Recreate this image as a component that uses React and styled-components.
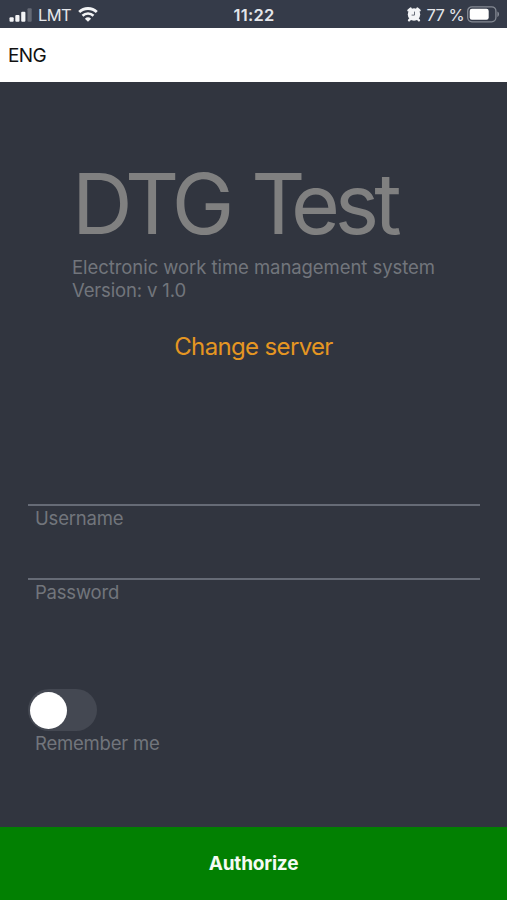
import React, { useState } from "react";
import styled, { createGlobalStyle } from "styled-components";

const App = () => {
  const [remember, setRemember] = useState(false);

  return (
    <Screen>
      <GlobalStyle />
      <StatusBar>
        <StatusGroup>
          <SignalIcon />
          <Carrier>LMT</Carrier>
          <WifiIcon />
        </StatusGroup>
        <Clock>11:22</Clock>
        <StatusGroup $end>
          <AlarmIcon />
          <Percent>77 %</Percent>
          <BatteryIcon />
        </StatusGroup>
      </StatusBar>
      <LanguageBar>ENG</LanguageBar>
      <Content>
        <Heading>
          <Title>
            DTG <TightLetter>T</TightLetter>est
          </Title>
          <Info $spacing="-0.06px">Electronic work time management system</Info>
          <Info $spacing="-0.15px">Version: v 1.0</Info>
        </Heading>
        <ServerLink type="button">Change server</ServerLink>
        <Form>
          <Field>
            <Input id="username" type="text" />
            <Label htmlFor="username">Username</Label>
          </Field>
          <Field>
            <Input id="password" type="password" />
            <Label htmlFor="password">Password</Label>
          </Field>
          <Remember>
            <Switch
              type="button"
              role="switch"
              aria-checked={remember}
              aria-labelledby="remember"
              $on={remember}
              onClick={() => setRemember(!remember)}
            >
              <Knob />
            </Switch>
            <Label as="span" id="remember">
              Remember me
            </Label>
          </Remember>
        </Form>
      </Content>
      <SubmitButton type="button">Authorize</SubmitButton>
    </Screen>
  );
};

export default App;

const SignalIcon = () => (
  <svg width="23" height="14" viewBox="0 0 23 14" fill="#f3f4f6">
    <rect x="0.5" y="9.3" width="4.2" height="4.4" rx="1" />
    <rect x="6.3" y="7" width="4.2" height="6.7" rx="1" />
    <rect x="12.2" y="3.7" width="4.2" height="10" rx="1" />
    <rect x="18.5" y="0.3" width="4.2" height="13.4" rx="1" opacity="0.25" />
  </svg>
);

const WifiIcon = () => (
  <svg width="20" height="15" viewBox="0 0 20 15" fill="none">
    <path d="M1.2 5.1a12.6 12.6 0 0 1 17.6 0" stroke="#f3f4f6" strokeWidth="2.8" />
    <path d="M4.5 8.8a7.9 7.9 0 0 1 11 0" stroke="#f3f4f6" strokeWidth="2.6" />
    <path d="M10 14.8 6.9 11.7a4.5 4.5 0 0 1 6.2 0Z" fill="#f3f4f6" />
  </svg>
);

const AlarmIcon = () => (
  <svg width="14" height="15" viewBox="0 0 14 15" fill="none">
    <path
      d="M1.5 3.4 3.6 1.6M12.5 3.4 10.4 1.6M3 12.2l-.9 1.1M11 12.2l.9 1.1"
      stroke="#f3f4f6"
      strokeWidth="2.4"
      strokeLinecap="round"
    />
    <circle cx="7" cy="7.5" r="6.2" fill="#f3f4f6" />
    <path d="M7.5 4.6v3.5H4.6" stroke="#6b707b" strokeWidth="1" />
  </svg>
);

const BatteryIcon = () => (
  <svg width="33" height="17" viewBox="0 0 33 17" fill="none">
    <rect x="0.7" y="0.8" width="28.2" height="15" rx="4.2" stroke="#858a94" strokeWidth="1.3" />
    <rect x="2.7" y="2.8" width="19" height="11" rx="2.2" fill="#fff" />
    <path d="M30.4 5.6c2.2.9 2.2 4.5 0 5.4Z" fill="#858a94" />
  </svg>
);

const GlobalStyle = createGlobalStyle`
  * {
    box-sizing: border-box;
  }

  body {
    margin: 0;
    background: #31353f;
    font-family: Inter, "Liberation Sans", sans-serif;
  }

  button,
  input {
    font-family: inherit;
  }
`;

const Screen = styled.main`
  display: flex;
  flex-direction: column;
  height: 100vh;
  min-height: 900px;
  overflow: hidden;
  background: #31353f;
`;

const StatusBar = styled.header`
  display: grid;
  grid-template-columns: 1fr auto 1fr;
  align-items: center;
  height: 28px;
  padding: 1px 7px 0 9px;
  background: #353b49;
  color: #e4e6ea;
`;

const StatusGroup = styled.div`
  display: flex;
  align-items: center;
  justify-content: ${({ $end }) => ($end ? "flex-end" : "flex-start")};

  svg {
    flex: none;
  }
`;

const Carrier = styled.span`
  margin: 0 7px 0 6px;
  font-size: 16.5px;
  letter-spacing: -0.6px;
`;

const Clock = styled.span`
  margin-right: 1px;
  font-size: 16.5px;
  font-weight: 600;
  letter-spacing: 0.2px;
`;

const Percent = styled.span`
  margin: 0 3px 0 6px;
  font-size: 16.5px;
  letter-spacing: -0.6px;
`;

const LanguageBar = styled.nav`
  display: flex;
  align-items: center;
  height: 54px;
  padding: 0 8px;
  background: #fff;
  color: #111;
  font-size: 19px;
  letter-spacing: -0.6px;
`;

const Content = styled.section`
  display: flex;
  flex: 1;
  flex-direction: column;
`;

const Heading = styled.div`
  margin: 71px 0 0 72px;
`;

const Title = styled.h1`
  margin: 0 0 2px;
  color: #808080;
  font-size: 84px;
  font-weight: 400;
  line-height: 101px;
  letter-spacing: -5px;
  word-spacing: 3px;
  white-space: nowrap;
`;

/* pulls the following "e" under the bar of the T */
const TightLetter = styled.span`
  letter-spacing: -14.5px;
`;

const Info = styled.p`
  margin: 0;
  color: #72757c;
  font-size: 18.5px;
  line-height: 23px;
  letter-spacing: ${({ $spacing }) => $spacing || "0"};
  white-space: nowrap;
`;

const ServerLink = styled.button`
  align-self: center;
  margin-top: 30px;
  padding: 0;
  border: 0;
  background: none;
  color: #e59622;
  font-size: 24px;
  line-height: 30px;
  letter-spacing: -0.65px;
  cursor: pointer;
`;

const Form = styled.form`
  display: flex;
  flex-direction: column;
  padding: 0 27px 0 28px;
  margin-top: 94px;
`;

const Field = styled.div`
  display: flex;
  flex-direction: column;
  height: 74px;
`;

const Input = styled.input`
  width: 100%;
  height: 51px;
  padding: 0 7px;
  border: 0;
  border-bottom: 2px solid #666b76;
  border-radius: 0;
  outline: none;
  background: transparent;
  color: #fff;
  font-size: 20px;
`;

const Label = styled.label`
  padding-left: 7px;
  color: #72757c;
  font-size: 18.5px;
  line-height: 24px;
  letter-spacing: -0.2px;
`;

const Remember = styled.div`
  display: flex;
  flex-direction: column;
  align-items: flex-start;
  margin-top: 85px;
`;

const Switch = styled.button`
  display: flex;
  align-items: center;
  justify-content: ${({ $on }) => ($on ? "flex-end" : "flex-start")};
  width: 69px;
  height: 42px;
  padding: 0 2px;
  border: 0;
  border-radius: 21px;
  background: ${({ $on }) => ($on ? "#008000" : "#444852")};
  cursor: pointer;
`;

const Knob = styled.span`
  width: 37px;
  height: 37px;
  border-radius: 50%;
  background: #fff;
`;

const SubmitButton = styled.button`
  height: 73px;
  padding: 0;
  border: 0;
  background: #028002;
  color: #f4fbf4;
  font-size: 19px;
  font-weight: 700;
  letter-spacing: -0.2px;
  cursor: pointer;
`;
